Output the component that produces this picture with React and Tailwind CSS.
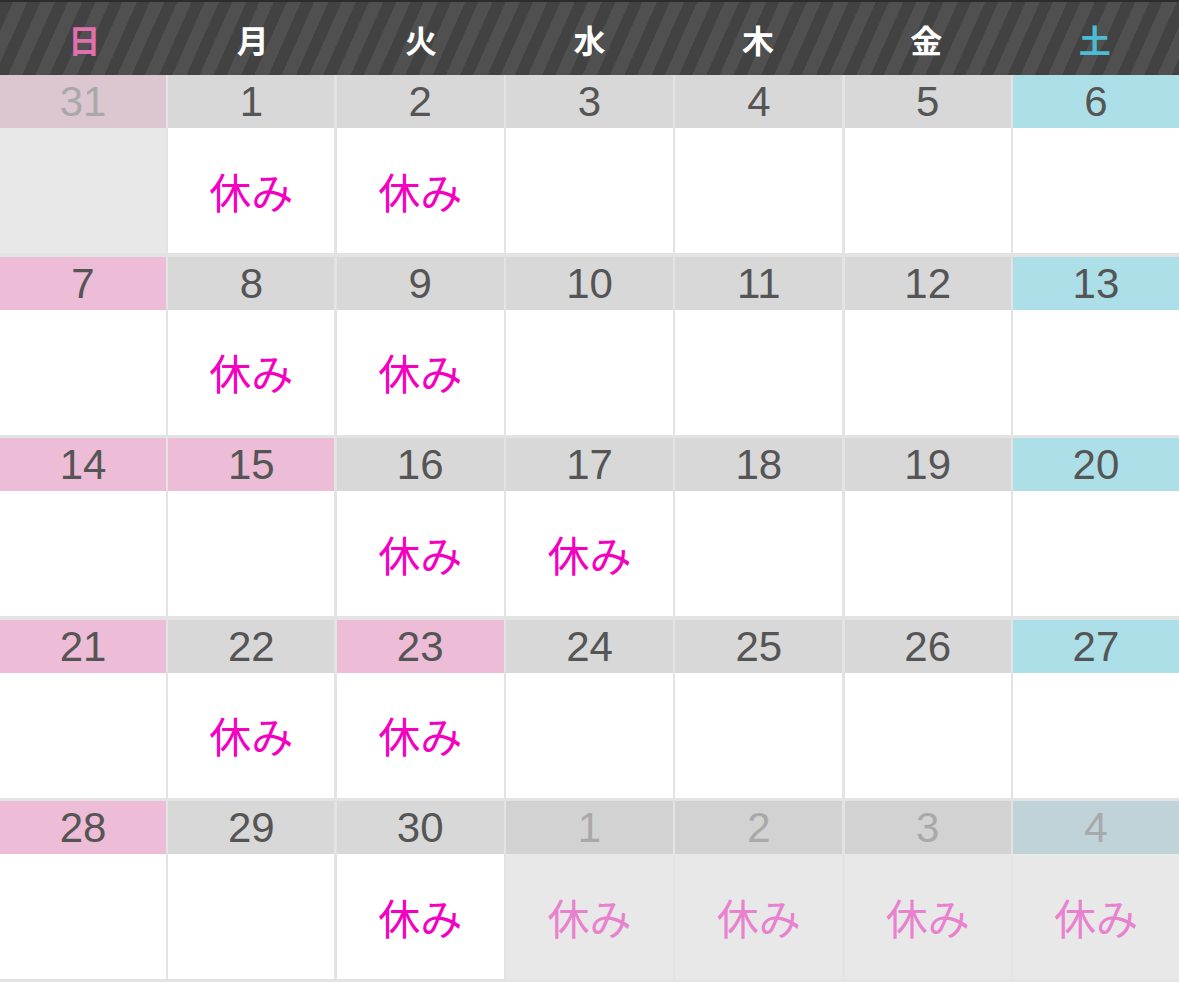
const WEEKDAYS = [
  { label: '日', color: 'text-[#e26fae]' },
  { label: '月', color: 'text-white' },
  { label: '火', color: 'text-white' },
  { label: '水', color: 'text-white' },
  { label: '木', color: 'text-white' },
  { label: '金', color: 'text-white' },
  { label: '土', color: 'text-[#4cbcd4]' },
]

// kind: prev | normal | sun | sat | hol | next | nextSat
const WEEKS = [
  [['31', 'prev'], ['1', 'normal', 1], ['2', 'normal', 1], ['3', 'normal'], ['4', 'normal'], ['5', 'normal'], ['6', 'sat']],
  [['7', 'sun'], ['8', 'normal', 1], ['9', 'normal', 1], ['10', 'normal'], ['11', 'normal'], ['12', 'normal'], ['13', 'sat']],
  [['14', 'sun'], ['15', 'hol'], ['16', 'normal', 1], ['17', 'normal', 1], ['18', 'normal'], ['19', 'normal'], ['20', 'sat']],
  [['21', 'sun'], ['22', 'normal', 1], ['23', 'hol', 1], ['24', 'normal'], ['25', 'normal'], ['26', 'normal'], ['27', 'sat']],
  [['28', 'sun'], ['29', 'normal'], ['30', 'normal', 1], ['1', 'next', 1], ['2', 'next', 1], ['3', 'next', 1], ['4', 'nextSat', 1]],
]

const BAND = {
  prev: 'bg-[#dcc7d1] text-[#a9a9a9]',
  normal: 'bg-[#d8d8d8] text-[#555555]',
  sun: 'bg-[#edbcd6] text-[#555555]',
  hol: 'bg-[#edbcd6] text-[#555555]',
  sat: 'bg-[#acdfe8] text-[#555555]',
  next: 'bg-[#d2d2d2] text-[#a9a9a9]',
  nextSat: 'bg-[#bfd3d8] text-[#a9a9a9]',
}

const faded = kind => kind === 'prev' || kind === 'next' || kind === 'nextSat'

function DayCell({ day, kind, off }) {
  return (
    <div className="flex flex-col">
      <div className={`h-[53px] flex items-center justify-center text-[42px] leading-none font-['Liberation_Sans',sans-serif] ${BAND[kind]}`}>
        <span className="mt-[1px]">{day}</span>
      </div>
      <div className={`h-[125px] flex items-center justify-center ${faded(kind) ? 'bg-[#e8e8e8]' : 'bg-white'}`}>
        {off ? (
          <span className={`text-[42px] leading-none font-['Noto_Sans_CJK_JP',sans-serif] ${faded(kind) ? 'text-[#e882cf]' : 'text-[#f400c0]'}`}>
            休み
          </span>
        ) : null}
      </div>
    </div>
  )
}

export default function App() {
  return (
    <div className="w-[1179px] h-[982px] overflow-hidden bg-[#e3e3e3] flex flex-col">
      <div className="h-[75px] shrink-0 border-t-2 border-[#2c2c2c] grid grid-cols-7 bg-[repeating-linear-gradient(114deg,#424242_0px,#424242_12px,#505050_12px,#505050_25px)]">
        {WEEKDAYS.map(w => (
          <div key={w.label} className={`flex items-center justify-center text-[32px] font-bold font-['Noto_Sans_CJK_JP',sans-serif] ${w.color}`}>
            {w.label}
          </div>
        ))}
      </div>
      <div className="flex flex-col gap-y-[3.5px] pb-[3px]">
        {WEEKS.map((week, i) => (
          <div key={i} className="grid grid-cols-[166px_166px_167px_167px_167px_166px_166px] gap-x-[2.33px]">
            {week.map(([day, kind, off], j) => (
              <DayCell key={j} day={day} kind={kind} off={off} />
            ))}
          </div>
        ))}
      </div>
    </div>
  )
}
